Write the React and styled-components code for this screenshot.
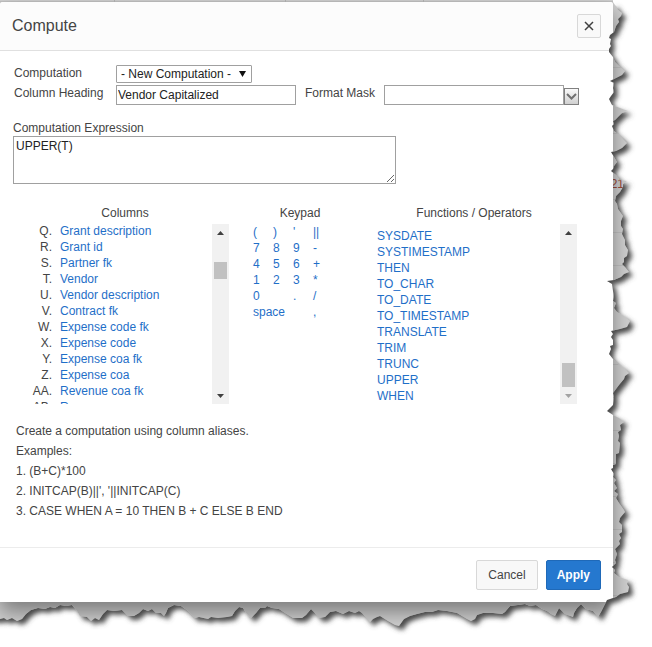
import { useState } from "react";
import styled, { createGlobalStyle } from "styled-components";

const GlobalStyle = createGlobalStyle`
  * {
    box-sizing: border-box;
  }

  body {
    margin: 0;
    background: #ffffff;
    color: #444444;
    font-family: "Liberation Sans", Arial, sans-serif;
    font-size: 12px;
    line-height: 16px;
  }

  button, input, select, textarea {
    margin: 0;
    font: inherit;
  }
`;

const Page = styled.div`
  position: relative;
  overflow: hidden;
  padding: 2px 39px 45px 0;
  background:
    linear-gradient(#b4b4b4, #b4b4b4) 114px 0 / 1px 2px no-repeat,
    linear-gradient(#b4b4b4, #b4b4b4) 285px 0 / 1px 2px no-repeat,
    linear-gradient(#b4b4b4, #b4b4b4) 423px 0 / 1px 2px no-repeat,
    repeating-linear-gradient(
      #cfcfcf 0,
      #cfcfcf 1px,
      #c0c0c0 1px,
      #c0c0c0 2px,
      #cfcfcf 2px,
      #cfcfcf 33px
    );
`;

const Dialog = styled.section`
  position: relative;
  background: #ffffff;
  border-radius: 3px 3px 0 0;
  box-shadow: 0 10px 20px rgba(0, 0, 0, 0.4);
`;

const Header = styled.header`
  display: flex;
  align-items: center;
  justify-content: space-between;
  height: 49px;
  padding: 0 12px;
  background: #fcfcfc;
  border-bottom: 1px solid #e0e0e0;
  border-radius: 3px 3px 0 0;
`;

const Title = styled.h1`
  margin: 0;
  font-size: 16px;
  font-weight: 400;
  line-height: 24px;
`;

const CloseButton = styled.button`
  display: flex;
  align-items: center;
  justify-content: center;
  width: 24px;
  height: 24px;
  padding: 0;
  background: #f9f9f9;
  border: 1px solid #d8d8d8;
  border-radius: 2px;
`;

const Body = styled.div`
  padding: 14px 13px 26px;
`;

const Row = styled.div`
  display: flex;
  height: 20px;
  padding-left: 1px;
`;

const Label = styled.label`
  flex: none;
  width: ${({ $width }) => $width || "auto"};
`;

const Select = styled.select`
  appearance: none;
  width: 136px;
  height: 18px;
  padding: 0 4px;
  background: #ffffff;
  border: 1px solid #a0a0a0;
  border-radius: 1px;
  color: #222222;
`;

const SelectBox = styled.div`
  position: relative;

  svg {
    position: absolute;
    top: 6px;
    right: 6px;
    pointer-events: none;
  }
`;

const Input = styled.input`
  width: 180px;
  height: 20px;
  padding: 0 1px;
  border: 1px solid #a0a0a0;
  background: #ffffff;
  color: #222222;
`;

const MaskLabel = styled(Label)`
  margin-left: 9px;
`;

const ListButton = styled.button`
  display: flex;
  align-items: center;
  justify-content: center;
  align-self: flex-end;
  width: 15px;
  height: 17px;
  padding: 0;
  background: linear-gradient(#fafafa, #d0d0d0);
  border: 1px solid #808080;
`;

const Expression = styled.div`
  display: flex;
  flex-direction: column;
  align-items: flex-start;
  margin-top: 15px;
`;

const TextArea = styled.textarea`
  width: 383px;
  max-width: 100%;
  height: 48px;
  padding: 1px 2px;
  border: 1px solid #a0a0a0;
  color: #222222;
`;

const Panels = styled.div`
  display: grid;
  grid-template-columns: 208px 94px 206px;
  gap: 24px;
  margin: 21px 0 0 8px;
`;

const PanelTitle = styled.h2`
  margin: 0 0 3px;
  font-size: 12px;
  font-weight: 400;
  text-align: center;
`;

const ListBox = styled.div`
  display: flex;
  justify-content: space-between;
  height: 180px;
  overflow: hidden;
`;

const List = styled.ul`
  margin: 0;
  padding: ${({ $padding }) => $padding};
  list-style: none;
`;

const ColumnItem = styled.li`
  display: grid;
  grid-template-columns: 31px auto;
  gap: 8px;
  white-space: nowrap;

  span {
    text-align: right;
  }
`;

const ColumnList = styled(List)`
  margin-top: -1px;
`;

const Link = styled.a`
  color: #1f6fc8;
  text-decoration: none;

  &:hover {
    text-decoration: underline;
  }
`;

const ScrollTrack = styled.div`
  display: flex;
  flex-direction: column;
  align-items: center;
  width: 17px;
  height: 180px;
  background: #f1f1f1;
`;

const ScrollButton = styled.button`
  display: flex;
  align-items: center;
  justify-content: center;
  width: 17px;
  height: 17px;
  padding: 0;
  background: none;
  border: 0;
  color: ${({ disabled }) => (disabled ? "#a3a3a3" : "#404040")};
`;

const Thumb = styled.div`
  width: 13px;
  height: ${({ $size }) => $size};
  margin-top: ${({ $offset }) => $offset};
  margin-bottom: auto;
  background: #c1c1c1;
`;

const Keys = styled.div`
  display: grid;
  grid-template-columns: repeat(4, 20px);
  grid-auto-rows: 16px;
`;

const Key = styled.button`
  grid-column: ${({ $column }) => $column};
  justify-self: start;
  padding: 0;
  background: none;
  border: 0;
  color: #1f6fc8;
  line-height: 16px;
`;

const Help = styled.div`
  margin-top: 17px;
  padding-left: 3px;
  line-height: 20px;

  p {
    margin: 0;
  }
`;

const Footer = styled.footer`
  display: flex;
  justify-content: flex-end;
  gap: 8px;
  padding: 12px;
  border-top: 1px solid #ececec;
`;

const Button = styled.button`
  height: 30px;
  padding: 0 ${({ $primary }) => ($primary ? "10px" : "11px")};
  background: ${({ $primary }) => ($primary ? "#2578cf" : "#f8f8f8")};
  border: 1px solid ${({ $primary }) => ($primary ? "#1f69b8" : "#d8d8d8")};
  border-radius: 2px;
  color: ${({ $primary }) => ($primary ? "#ffffff" : "#444444")};
  font-weight: ${({ $primary }) => ($primary ? 700 : 400)};
`;

const Behind = styled.span`
  position: absolute;
  top: 176px;
  right: 28px;
  color: #9a4a3a;
`;

const Edge = styled.svg`
  position: absolute;
  inset: 0;
  width: 100%;
  height: 100%;
  pointer-events: none;
`;

const columns = [
  ["Q", "Grant description"],
  ["R", "Grant id"],
  ["S", "Partner fk"],
  ["T", "Vendor"],
  ["U", "Vendor description"],
  ["V", "Contract fk"],
  ["W", "Expense code fk"],
  ["X", "Expense code"],
  ["Y", "Expense coa fk"],
  ["Z", "Expense coa"],
  ["AA", "Revenue coa fk"],
  ["AB", "Revenue coa"],
];

const functions = [
  "SYSDATE",
  "SYSTIMESTAMP",
  "THEN",
  "TO_CHAR",
  "TO_DATE",
  "TO_TIMESTAMP",
  "TRANSLATE",
  "TRIM",
  "TRUNC",
  "UPPER",
  "WHEN",
];

const keys = [
  ["(", 1], [")", 2], ["'", 3], ["||", 4],
  ["7", 1], ["8", 2], ["9", 3], ["-", 4],
  ["4", 1], ["5", 2], ["6", 3], ["+", 4],
  ["1", 1], ["2", 2], ["3", 3], ["*", 4],
  ["0", 1], [".", 3], ["/", 4],
  ["space", "1 / span 2"], [",", 4],
];

// torn paper outline, down the right side and then back along the bottom
const tear =
  "613,2 615,5 617,7 617,9 622,13 621,16 618,19 619,22 616,26 614,32 610,35 609,38 611,39 610,44 611,46 609,49 609,52 613,57 615,62 619,66 625,71 622,75 614,79 610,81 614,83 613,88 614,92 611,96 609,99 612,105 620,108 628,111 622,113 618,117 615,120 613,121 614,124 612,126 614,131 618,134 622,138 627,143 622,148 616,151 611,152 614,157 617,162 614,166 613,169 611,171 616,175 620,180 627,181 623,184 623,187 620,192 616,196 615,201 617,204 618,209 623,216 621,221 621,226 623,229 622,234 625,240 625,245 628,250 627,256 624,258 624,262 622,264 625,267 629,272 624,274 621,277 614,280 607,281 612,284 613,291 614,296 613,301 616,303 614,308 617,312 624,316 630,321 627,327 620,329 611,331 613,334 611,337 613,340 613,345 610,346 611,349 609,354 613,359 618,364 624,368 629,373 625,376 624,379 619,385 613,393 614,397 613,405 607,411 613,415 619,418 624,422 620,425 621,430 618,432 619,436 618,441 620,443 619,453 616,454 616,464 613,465 613,468 611,469 614,474 613,477 616,480 614,483 617,488 614,491 618,494 616,498 619,503 624,510 625,512 620,518 619,522 622,525 622,532 619,534 621,538 619,541 620,544 615,549 617,554 615,560 616,563 612,567 615,570 614,573 619,577 628,580 627,584 629,587 628,592 620,594 616,597 607,600 605,604 601,612 598,617 593,611 586,609 581,604 577,608 574,613 573,617 565,614 559,608 555,616 551,614 547,611 542,609 536,605 530,606 525,604 518,605 510,606 505,612 502,614 493,613 483,613 477,615 475,619 471,621 467,619 457,613 447,611 438,610 432,612 425,612 417,614 410,616 404,619 399,626 395,625 388,621 380,616 377,617 373,619 370,622 362,613 359,611 355,613 349,611 343,614 336,611 330,612 325,617 319,618 314,612 311,609 306,615 302,618 293,618 285,613 279,609 272,608 267,606 265,608 260,608 256,613 251,618 246,613 243,608 239,607 235,611 232,616 227,617 218,618 211,617 208,619 199,617 195,618 188,611 181,606 174,605 168,608 166,613 164,616 161,613 156,613 152,609 148,611 143,609 139,613 134,616 128,616 122,610 114,611 107,610 103,614 99,620 95,618 91,621 87,617 80,616 77,611 72,605 66,606 60,605 55,608 50,607 45,609 38,608 31,610 26,614 22,619 17,621 12,618 7,620 4,618 0,619";

const TornEdge = () => (
  <Edge viewBox="0 0 652 647" preserveAspectRatio="none" aria-hidden="true">
    <defs>
      <filter id="soften" x="-10%" y="-10%" width="120%" height="120%">
        <feGaussianBlur stdDeviation="2.8" />
      </filter>
      <clipPath id="outside">
        <polygon points={`652,0 613,0 ${tear} 0,647 652,647`} />
      </clipPath>
    </defs>
    <g clipPath="url(#outside)">
      <rect width="652" height="647" fill="#ffffff" />
      <polygon
        points={`-20,6 613,6 ${tear} -20,619`}
        transform="translate(4 4)"
        fill="#4c4c4c"
        filter="url(#soften)"
      />
    </g>
  </Edge>
);

const Arrow = ({ down }) => (
  <svg width="7" height="4" viewBox="0 0 7 4" fill="currentColor">
    <path d={down ? "M0 0h7L3.5 4z" : "M0 4h7L3.5 0z"} />
  </svg>
);

const Scrollbar = ({ offset, size, atEnd }) => (
  <ScrollTrack>
    <ScrollButton type="button" aria-label="Scroll up">
      <Arrow />
    </ScrollButton>
    <Thumb $offset={offset} $size={size} />
    <ScrollButton type="button" aria-label="Scroll down" disabled={atEnd}>
      <Arrow down />
    </ScrollButton>
  </ScrollTrack>
);

const App = () => {
  const [heading, setHeading] = useState("Vendor Capitalized");
  const [mask, setMask] = useState("");
  const [expression, setExpression] = useState("UPPER(T)");

  const append = (text) => setExpression(expression + text);
  const onPick = (text) => (e) => {
    e.preventDefault();
    append(text);
  };

  return (
    <Page>
      <GlobalStyle />
      <Behind>21</Behind>
      <Dialog role="dialog" aria-labelledby="title">
        <Header>
          <Title id="title">Compute</Title>
          <CloseButton type="button" aria-label="Close">
            <svg width="10" height="10" viewBox="0 0 10 10" stroke="#404040" strokeWidth="1.5">
              <path d="M1 1l8 8M9 1l-8 8" />
            </svg>
          </CloseButton>
        </Header>

        <Body>
          <Row>
            <Label htmlFor="computation" $width="102px">
              Computation
            </Label>
            <SelectBox>
              <Select id="computation">
                <option>- New Computation -</option>
              </Select>
              <svg width="7" height="6" viewBox="0 0 7 6" fill="#111111">
                <path d="M0 0h7L3.5 6z" />
              </svg>
            </SelectBox>
          </Row>
          <Row>
            <Label htmlFor="heading" $width="102px">
              Column Heading
            </Label>
            <Input id="heading" value={heading} onChange={(e) => setHeading(e.target.value)} />
            <MaskLabel htmlFor="mask" $width="79px">
              Format Mask
            </MaskLabel>
            <Input id="mask" value={mask} onChange={(e) => setMask(e.target.value)} />
            <ListButton type="button" aria-label="Format masks">
              <svg width="11" height="7" viewBox="0 0 11 7" fill="none" stroke="#707070" strokeWidth="2">
                <path d="M1 1l4.5 4.5L10 1" />
              </svg>
            </ListButton>
          </Row>

          <Expression>
            <Label htmlFor="expression">Computation Expression</Label>
            <TextArea
              id="expression"
              value={expression}
              onChange={(e) => setExpression(e.target.value)}
            />
          </Expression>

          <Panels>
            <div>
              <PanelTitle>Columns</PanelTitle>
              <ListBox>
                <ColumnList $padding="0">
                  {columns.map(([alias, name]) => (
                    <ColumnItem key={alias}>
                      <span>{alias}.</span>
                      <Link href="#" onClick={onPick(alias)}>
                        {name}
                      </Link>
                    </ColumnItem>
                  ))}
                </ColumnList>
                <Scrollbar offset="21px" size="17px" />
              </ListBox>
            </div>
            <div>
              <PanelTitle>Keypad</PanelTitle>
              <Keys>
                {keys.map(([key, column]) => (
                  <Key
                    key={key}
                    type="button"
                    $column={column}
                    onClick={() => append(key === "space" ? " " : key)}
                  >
                    {key}
                  </Key>
                ))}
              </Keys>
            </div>
            <div>
              <PanelTitle>Functions / Operators</PanelTitle>
              <ListBox>
                <List $padding="4px 0 0 6px">
                  {functions.map((name) => (
                    <li key={name}>
                      <Link href="#" onClick={onPick(name)}>
                        {name}
                      </Link>
                    </li>
                  ))}
                </List>
                <Scrollbar offset="122px" size="24px" atEnd />
              </ListBox>
            </div>
          </Panels>

          <Help>
            <p>Create a computation using column aliases.</p>
            <p>Examples:</p>
            <p>1. (B+C)*100</p>
            <p>2. INITCAP(B)||', '||INITCAP(C)</p>
            <p>3. CASE WHEN A = 10 THEN B + C ELSE B END</p>
          </Help>
        </Body>

        <Footer>
          <Button type="button">Cancel</Button>
          <Button type="button" $primary>
            Apply
          </Button>
        </Footer>
      </Dialog>
      <TornEdge />
    </Page>
  );
};

export default App;
